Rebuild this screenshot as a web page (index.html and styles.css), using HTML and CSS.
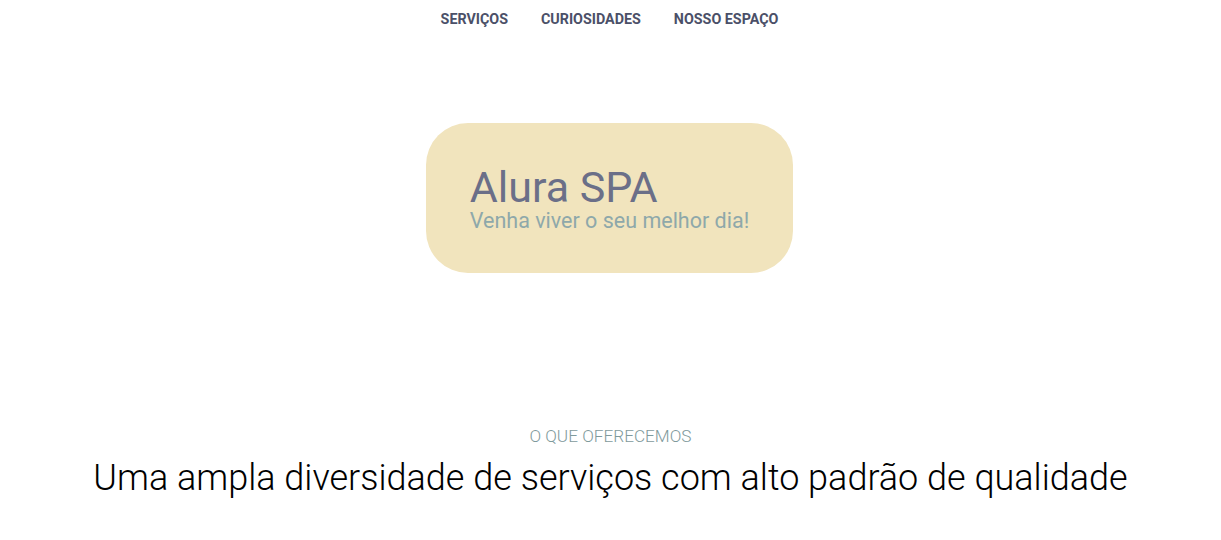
FILE: index.html
```html
<!DOCTYPE html>
<html lang="pt-BR">
<head>
<meta charset="utf-8">
<title>Alura SPA</title>
<link rel="stylesheet" href="styles.css">
</head>
<body>
<header class="topo">
  <nav class="menu">
    <a class="menu-item" href="#servicos">Serviços</a>
    <a class="menu-item" href="#curiosidades">Curiosidades</a>
    <a class="menu-item" href="#espaco">Nosso Espaço</a>
  </nav>
</header>
<main>
  <section class="banner">
    <div class="banner-card">
      <h1 class="banner-titulo">Alura SPA</h1>
      <p class="banner-sub">Venha viver o seu melhor dia!</p>
    </div>
  </section>
  <section class="servicos" id="servicos">
    <p class="servicos-rotulo">O que oferecemos</p>
    <h2 class="servicos-titulo">Uma ampla diversidade de serviços com alto padrão de qualidade</h2>
  </section>
</main>
</body>
</html>
```
FILE: styles.css
```css
* { box-sizing: border-box; }
body {
  margin: 0;
  font-family: Roboto, "Noto Sans", sans-serif;
  background: #fff;
}
.topo {
  display: flex;
  justify-content: center;
  padding-top: 11px;
  padding-right: 2px;
}
.menu {
  display: flex;
  gap: 33px;
}
.menu-item {
  font-size: 14.3px;
  font-weight: 700;
  text-transform: uppercase;
  color: #4b5068;
  text-decoration: none;
  line-height: 17px;
}
.banner {
  display: flex;
  justify-content: center;
  padding-top: 95px;
  padding-right: 2px;
}
.banner-card {
  height: 150px;
  background: #f1e4bd;
  border-radius: 42px;
  padding: 41px 44px;
  white-space: nowrap;
}
.banner-titulo {
  margin: 0;
  font-size: 43px;
  font-weight: 400;
  color: #6b6f88;
  line-height: 46px;
}
.banner-sub {
  margin: 0;
  font-size: 21.5px;
  color: #8ea8aa;
  line-height: 22px;
}
.servicos {
  padding-top: 153px;
  text-align: center;
}
.servicos-rotulo {
  margin: 0;
  font-size: 17.2px;
  font-weight: 300;
  color: #7f9a9c;
  text-transform: uppercase;
  line-height: 20px;
}
.servicos-titulo {
  margin: 11px 0 0;
  font-size: 36px;
  font-weight: 300;
  color: #000;
  line-height: 42px;
}
```
